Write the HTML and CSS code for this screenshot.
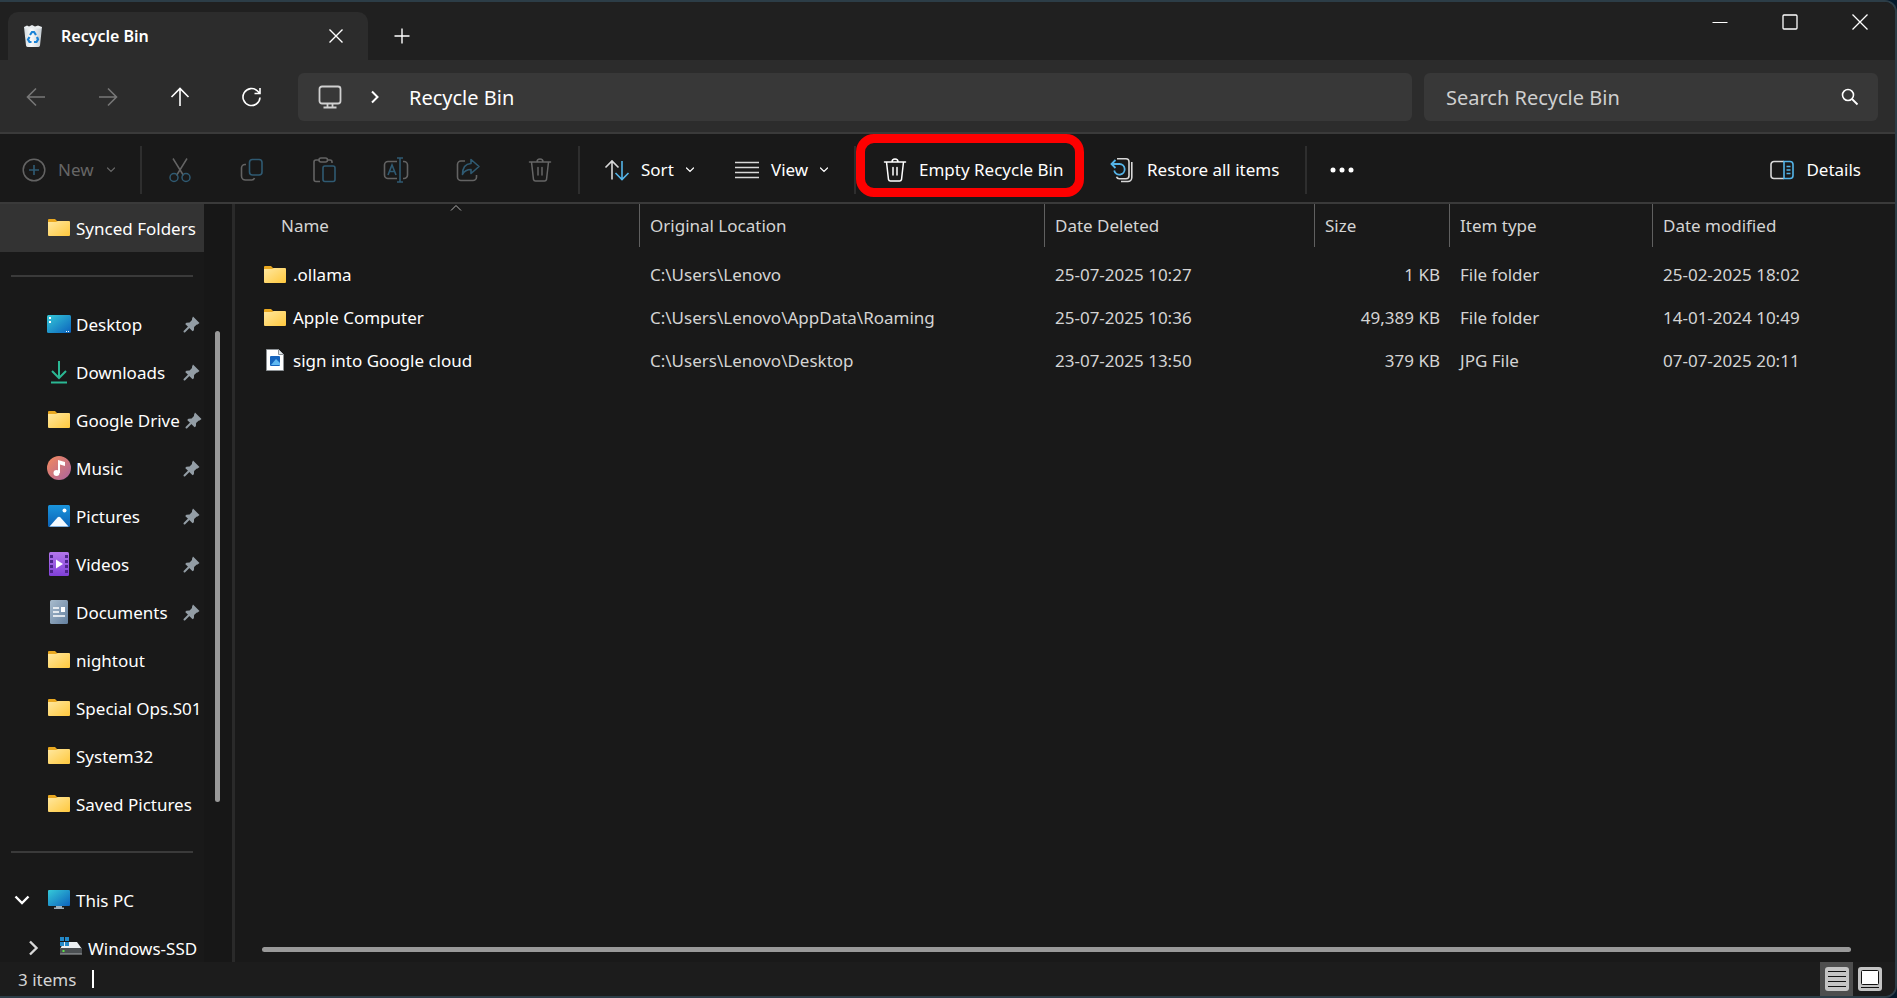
FILE: index.html
```
<!DOCTYPE html>
<html lang="en">
<head>
    <meta charset="UTF-8">
    <meta name="viewport" content="width=device-width, initial-scale=1.0">
    <title>Recycle Bin</title>
    <link rel="stylesheet" href="styles.css">
</head>
<body>
    <!-- Shared icons -->
    <svg class="defs" width="0" height="0" aria-hidden="true">
        <defs>
            <linearGradient id="g-folder" x1="0" y1="0" x2="1" y2="1"><stop offset="0" stop-color="#ffe8a0"/><stop offset="1" stop-color="#ffc83d"/></linearGradient>
            <linearGradient id="g-desktop" x1="0" y1="0" x2="1" y2="1"><stop offset="0" stop-color="#35c9d8"/><stop offset="1" stop-color="#0c62bd"/></linearGradient>
            <linearGradient id="g-music" x1="0" y1="0" x2="1" y2="1"><stop offset="0" stop-color="#f58b5c"/><stop offset="1" stop-color="#a8629f"/></linearGradient>
            <linearGradient id="g-pictures" x1="0" y1="0" x2="0" y2="1"><stop offset="0" stop-color="#1a95dd"/><stop offset="1" stop-color="#0c62b5"/></linearGradient>
            <linearGradient id="g-videos" x1="0" y1="0" x2="0" y2="1"><stop offset="0" stop-color="#b476ec"/><stop offset="1" stop-color="#8040d8"/></linearGradient>
            <linearGradient id="g-documents" x1="0" y1="0" x2="1" y2="1"><stop offset="0" stop-color="#a9bccd"/><stop offset="1" stop-color="#64809f"/></linearGradient>
            <linearGradient id="g-bin" x1="0" y1="0" x2="1" y2="0"><stop offset="0" stop-color="#d3dade"/><stop offset="0.4" stop-color="#f8fafb"/><stop offset="1" stop-color="#c4ccd2"/></linearGradient>
        </defs>
        <symbol id="folder" viewBox="0 0 24 24">
            <path d="M1 4a1 1 0 0 1 1-1h6l2 2h12v4H1z" fill="#e9a820"/>
            <path d="M1 6h8l2-1h11a1 1 0 0 1 1 1v13a1 1 0 0 1-1 1H2a1 1 0 0 1-1-1z" fill="url(#g-folder)"/>
        </symbol>
        <symbol id="pin" viewBox="0 0 18 18">
            <path d="M10 1.500 16.500 8l-2 1.600-1 .1-2.400 2.400-.2 3.100-1.300 1.100L2.200 9l1.200-1.300 3.200-.2L9 5.100l.1-1.700z" fill="#939da5"/>
            <path d="M6 12 1.500 16.500" stroke="#939da5" stroke-width="2" stroke-linecap="round"/>
        </symbol>
        <symbol id="chevron" viewBox="0 0 10 10">
            <path d="M1.500 3 5 6.500 8.500 3" fill="none" stroke="currentColor" stroke-width="1.200" stroke-linecap="round"/>
        </symbol>
        <symbol id="trash" viewBox="0 0 26 26">
            <path d="M2.500 5h21M10 5a3 3 0 0 1 6 0M4.500 5l2 17.500a2 2 0 0 0 2 1.500h9a2 2 0 0 0 2-1.500L21.500 5M11 10.500v7.500M15 10.500v7.500" fill="none" stroke="currentColor" stroke-width="1.500" stroke-linecap="round"/>
        </symbol>
    </svg>

    <div class="window">
        <header class="title-bar">
            <div class="tab">
                <svg width="22" height="24" viewBox="0 0 22 24">
                    <path d="M2 3h18l-2 18.500a2 2 0 0 1-2 1.500H6a2 2 0 0 1-2-1.500z" fill="url(#g-bin)"/>
                    <path d="M2 3l3-1.500 2 1L10 1l3 1.500 3-1 4 1.500-1 1.500H3z" fill="#e9edf0"/>
                    <path d="M8 11l2-3h2l2 3M15 13l1 2.500-1.500 2.500H12M9.500 18H7.500L6 15.500 7.500 13" fill="none" stroke="#1b83d6" stroke-width="2.200"/>
                </svg>
                <span class="tab-title">Recycle Bin</span>
                <button class="tab-close" aria-label="Close tab">
                    <svg width="16" height="16" viewBox="0 0 16 16"><path d="M1.500 1.500l13 13M14.500 1.500l-13 13" stroke="#fff" stroke-width="1.400"/></svg>
                </button>
            </div>
            <button class="new-tab" aria-label="New tab">
                <svg width="16" height="16" viewBox="0 0 16 16"><path d="M8 0.500v15M0.500 8h15" stroke="#fff" stroke-width="1.400"/></svg>
            </button>
            <div class="window-controls">
                <button aria-label="Minimize"><svg width="16" height="16" viewBox="0 0 16 16"><path d="M0.500 8.500h15" stroke="#fff"/></svg></button>
                <button aria-label="Maximize"><svg width="16" height="16" viewBox="0 0 16 16"><rect x="1" y="1" width="14" height="14" rx="1" fill="none" stroke="#fff" stroke-width="1.300"/></svg></button>
                <button aria-label="Close"><svg width="16" height="16" viewBox="0 0 16 16"><path d="M0.500 0.500l15 15M15.500 0.500l-15 15" stroke="#fff" stroke-width="1.300"/></svg></button>
            </div>
        </header>

        <nav class="nav-bar">
            <div class="nav-buttons">
                <button class="dim" aria-label="Back"><svg width="20" height="20" viewBox="0 0 20 20"><path d="M19 10H1.500M10 1.500 1.500 10l8.500 8.500"/></svg></button>
                <button class="dim" aria-label="Forward"><svg width="20" height="20" viewBox="0 0 20 20"><path d="M1 10h17.500M10 1.500l8.500 8.500-8.500 8.500"/></svg></button>
                <button aria-label="Up"><svg width="20" height="20" viewBox="0 0 20 20"><path d="M10 19V1.500M1.500 10 10 1.500l8.500 8.500"/></svg></button>
                <button aria-label="Refresh"><svg width="20" height="20" viewBox="0 0 20 20"><path d="M18 10.500A8.500 8.500 0 1 1 15.500 4L18 6.500M18 1v5.500h-5.500"/></svg></button>
            </div>
            <div class="address">
                <svg width="24" height="24" viewBox="0 0 24 24"><rect x="1.500" y="1.500" width="21" height="17" rx="2.500" fill="none" stroke="#d0d0d0" stroke-width="1.800"/><path d="M9.500 19v3.500M14.500 19v3.500M5.500 22.500h13" stroke="#d0d0d0" stroke-width="1.800"/></svg>
                <svg class="crumb-arrow" width="10" height="14" viewBox="0 0 10 14"><path d="M2 1.500 7.500 7 2 12.500" fill="none" stroke="#fff" stroke-width="2"/></svg>
                <a href="#">Recycle Bin</a>
            </div>
            <form class="search">
                <input type="text" placeholder="Search Recycle Bin" aria-label="Search Recycle Bin">
                <button type="button" aria-label="Search"><svg width="18" height="18" viewBox="0 0 18 18"><circle cx="7" cy="7" r="5.500" fill="none" stroke="#fff" stroke-width="1.600"/><path d="M11 11l5.500 5.500" stroke="#fff" stroke-width="1.800"/></svg></button>
            </form>
        </nav>

        <div class="toolbar">
            <button class="tool new" disabled>
                <svg width="24" height="24" viewBox="0 0 24 24"><circle cx="12" cy="12" r="10.800" fill="none" stroke="#636363" stroke-width="1.500"/><path d="M12 7v10M7 12h10" stroke="#2f5a72" stroke-width="1.700"/></svg>
                <span>New</span>
                <svg width="10" height="10"><use href="#chevron"/></svg>
            </button>
            <span class="divider"></span>
            <button class="tool icon-only" aria-label="Cut" disabled>
                <svg width="26" height="26" viewBox="0 0 26 26" fill="none" stroke-width="1.500"><path d="M6 1.500l10.500 17M20 1.500l-10.500 17" stroke="#636363"/><circle cx="7" cy="20.500" r="4" stroke="#2f5a72"/><circle cx="19" cy="20.500" r="4" stroke="#2f5a72"/></svg>
            </button>
            <button class="tool icon-only" aria-label="Copy" disabled>
                <svg width="26" height="26" viewBox="0 0 26 26" fill="none" stroke-width="1.600"><path d="M7 7.500H6A3.500 3.500 0 0 0 2.500 11V19A4 4 0 0 0 6.500 23h6a3 3 0 0 0 3-2" stroke="#636363"/><rect x="10.500" y="2.500" width="12.500" height="15.500" rx="3" stroke="#2f5a72"/></svg>
            </button>
            <button class="tool icon-only" aria-label="Paste" disabled>
                <svg width="26" height="26" viewBox="0 0 26 26" fill="none" stroke-width="1.600"><path d="M8 3H5a2 2 0 0 0-2 2v17.500a2 2 0 0 0 2 2h4M16 3h3a2 2 0 0 1 2 2v1" stroke="#636363"/><rect x="8" y="1" width="8.500" height="4" rx="2" stroke="#636363"/><rect x="12" y="9" width="12" height="15.500" rx="2" stroke="#2f5a72"/></svg>
            </button>
            <button class="tool icon-only" aria-label="Rename" disabled>
                <svg width="26" height="26" viewBox="0 0 26 26" fill="none" stroke-width="1.600"><path d="M14 4.500H5A3.500 3.500 0 0 0 1.500 8v10A3.500 3.500 0 0 0 5 21.500h9M20 4.500h1a3.500 3.500 0 0 1 3.500 3.500v10a3.500 3.500 0 0 1-3.500 3.500h-1" stroke="#636363"/><path d="M5 18 9 8l4 10M6.500 14.500h5M17 1v24M14 1h6M14 25h6" stroke="#2f5a72"/></svg>
            </button>
            <button class="tool icon-only" aria-label="Share" disabled>
                <svg width="26" height="26" viewBox="0 0 26 26" fill="none" stroke-width="1.600" stroke-linejoin="round"><path d="M10 4H6a3.500 3.500 0 0 0-3.500 3.500V20A3.500 3.500 0 0 0 6 23.500h12A3.500 3.500 0 0 0 21.500 20v-2" stroke="#636363"/><path d="M16 2.500 24 9.500l-8 7V12.500c-4.500 0-7 2-8.500 5C7.500 11 10.500 6.800 16 6.500z" stroke="#2f5a72"/></svg>
            </button>
            <button class="tool icon-only" aria-label="Delete" disabled>
                <svg width="26" height="26"><use href="#trash"/></svg>
            </button>
            <span class="divider"></span>
            <button class="tool sort">
                <svg width="26" height="26" viewBox="0 0 26 26" fill="none" stroke-width="1.600"><path d="M8 22.500V4M1.500 10.500 8 4l6.500 6.500" stroke="#d8d8d8"/><path d="M18 4v18.500M11.500 16l6.500 6.500 6.500-6.500" stroke="#54b4e8"/></svg>
                <span>Sort</span>
                <svg width="10" height="10"><use href="#chevron"/></svg>
            </button>
            <button class="tool view">
                <svg width="26" height="26" viewBox="0 0 26 26"><path d="M1 5.500h24M1 10.500h24M1 15.500h24M1 20.500h24" stroke="#d8d8d8" stroke-width="1.300"/></svg>
                <span>View</span>
                <svg width="10" height="10"><use href="#chevron"/></svg>
            </button>
            <span class="divider"></span>
            <button class="tool empty-bin">
                <svg width="26" height="26"><use href="#trash"/></svg>
                <span>Empty Recycle Bin</span>
            </button>
            <button class="tool restore">
                <svg width="26" height="26" viewBox="0 0 26 26" fill="none" stroke-width="1.600"><path d="M7 1.800h9a3 3 0 0 1 3 3v14a3 3 0 0 1-3 3H9.500a3 3 0 0 1-3-2M21.800 5v15.500a4 4 0 0 1-4 4H11" stroke="#d8d8d8"/><path d="M2 7h7.500a5.300 5.300 0 1 1-5.300 6.500M5.500 3 1.500 7l4 4" stroke="#54b4e8" stroke-width="1.800"/></svg>
                <span>Restore all items</span>
            </button>
            <span class="divider"></span>
            <button class="tool icon-only more" aria-label="See more">
                <svg width="24" height="6" viewBox="0 0 24 6" fill="#fff"><circle cx="3" cy="3" r="2.500"/><circle cx="12" cy="3" r="2.500"/><circle cx="21" cy="3" r="2.500"/></svg>
            </button>
            <button class="tool details">
                <svg width="26" height="26" viewBox="0 0 26 26" fill="none" stroke-width="1.600"><path d="M15 4.500H5a3 3 0 0 0-3 3v11a3 3 0 0 0 3 3h10" stroke="#d8d8d8"/><path d="M15 4.500h6a3 3 0 0 1 3 3v11a3 3 0 0 1-3 3h-6zM17.500 9.500h4M17.500 13h4M17.500 16.500h4" stroke="#54b4e8"/></svg>
                <span>Details</span>
            </button>
        </div>

        <div class="content">
            <aside class="sidebar">
                <div class="tree">
                    <a class="item selected" href="#"><svg width="24" height="24"><use href="#folder"/></svg><span>Synced Folders</span></a>
                    <hr>
                    <a class="item" href="#">
                        <svg width="24" height="24" viewBox="0 0 24 24"><rect y="3" width="24" height="18" rx="1.500" fill="url(#g-desktop)"/><path d="M2 5h2v2H2zM2 9h2v2H2zM19 19h1v1h-1zM21 19h1v1h-1z" fill="#fff"/></svg>
                        <span>Desktop</span><svg class="pin" width="18" height="18"><use href="#pin"/></svg>
                    </a>
                    <a class="item" href="#">
                        <svg width="24" height="24" viewBox="0 0 24 24" fill="none" stroke="#2bb894" stroke-width="2"><path d="M12 1v17M5 11l7 7 7-7M4 22.500h16"/></svg>
                        <span>Downloads</span><svg class="pin" width="18" height="18"><use href="#pin"/></svg>
                    </a>
                    <a class="item" href="#"><svg width="24" height="24"><use href="#folder"/></svg><span>Google Drive</span><svg class="pin" width="18" height="18"><use href="#pin"/></svg></a>
                    <a class="item" href="#">
                        <svg width="24" height="24" viewBox="0 0 24 24"><circle cx="12" cy="12" r="12" fill="url(#g-music)"/><circle cx="9.500" cy="17" r="3" fill="#fff"/><path d="M11 17V4l7 2v4l-5-1.500V17z" fill="#fff"/></svg>
                        <span>Music</span><svg class="pin" width="18" height="18"><use href="#pin"/></svg>
                    </a>
                    <a class="item" href="#">
                        <svg width="24" height="24" viewBox="0 0 24 24"><rect x="1" y="1" width="22" height="22" rx="1.500" fill="url(#g-pictures)"/><path d="M2.500 22.500 10.500 13.500q1.500-1.500 3 0l8 9z" fill="#f4faff"/><circle cx="17.500" cy="6.500" r="2" fill="#fff"/></svg>
                        <span>Pictures</span><svg class="pin" width="18" height="18"><use href="#pin"/></svg>
                    </a>
                    <a class="item" href="#">
                        <svg width="24" height="24" viewBox="0 0 24 24"><rect x="2" width="20" height="24" rx="1.500" fill="url(#g-videos)"/><path d="M3 3h3v3H3zM3 8h3v3H3zM3 13h3v3H3zM3 18h3v3H3zM18 3h3v3h-3zM18 8h3v3h-3zM18 13h3v3h-3zM18 18h3v3h-3z" fill="#4d238c"/><path d="M9 7.500v9l7-4.500z" fill="#fff"/></svg>
                        <span>Videos</span><svg class="pin" width="18" height="18"><use href="#pin"/></svg>
                    </a>
                    <a class="item" href="#">
                        <svg width="24" height="24" viewBox="0 0 24 24"><rect x="3" width="18" height="24" rx="1.500" fill="url(#g-documents)"/><path d="M6 8h6M6 12h6M6 16h12" stroke="#fff" stroke-width="1.500"/><rect x="14" y="7" width="4" height="5" fill="#fff"/></svg>
                        <span>Documents</span><svg class="pin" width="18" height="18"><use href="#pin"/></svg>
                    </a>
                    <a class="item" href="#"><svg width="24" height="24"><use href="#folder"/></svg><span>nightout</span></a>
                    <a class="item" href="#"><svg width="24" height="24"><use href="#folder"/></svg><span>Special Ops.S01</span></a>
                    <a class="item" href="#"><svg width="24" height="24"><use href="#folder"/></svg><span>System32</span></a>
                    <a class="item" href="#"><svg width="24" height="24"><use href="#folder"/></svg><span>Saved Pictures</span></a>
                    <hr>
                    <a class="item expandable" href="#">
                        <svg class="arrow" width="16" height="16" viewBox="0 0 16 16"><path d="M1.500 4.500l6.500 6.500 6.500-6.500" fill="none" stroke="#fff" stroke-width="2.400"/></svg>
                        <svg width="24" height="24" viewBox="0 0 24 24"><rect x="1" y="2" width="22" height="16" rx="1" fill="url(#g-desktop)"/><path d="M9 18h6v1.500h2V21H7v-1.500h2z" fill="#9fb0bb"/></svg>
                        <span>This PC</span>
                    </a>
                    <a class="item expandable child" href="#">
                        <svg class="arrow" width="16" height="16" viewBox="0 0 16 16"><path d="M5 1.500l6.500 6.500-6.500 6.500" fill="none" stroke="#d8d8d8" stroke-width="2.400"/></svg>
                        <svg width="24" height="24" viewBox="0 0 24 24"><path d="M5 6h13l5 7H1z" fill="#eceff1"/><rect x="1" y="12" width="22" height="6" rx="1" fill="#4b4f52"/><path d="M1 18h22" stroke="#a7abad"/><path d="M3.500 15h2" stroke="#5fe04a" stroke-width="2"/><path d="M1 1h4v4H1zM6 1h4v4H6zM1 6h4v4H1zM6 6h4v4H6z" fill="#2389c9"/></svg>
                        <span>Windows-SSD</span>
                    </a>
                </div>
                <div class="scroll-track"><div class="thumb"></div></div>
            </aside>

            <main class="files">
                <table>
                    <colgroup>
                        <col class="col-name"><col class="col-location"><col class="col-deleted"><col class="col-size"><col class="col-type"><col>
                    </colgroup>
                    <thead>
                        <tr>
                            <th><div class="sorted">Name<svg class="caret" width="12" height="8" viewBox="0 0 12 8"><path d="M1 6.500 6 1.500l5 5" fill="none" stroke="#b0b0b0"/></svg></div></th>
                            <th>Original Location</th>
                            <th>Date Deleted</th>
                            <th>Size</th>
                            <th>Item type</th>
                            <th>Date modified</th>
                        </tr>
                    </thead>
                    <tbody>
                        <tr>
                            <td><div class="file"><svg width="24" height="24"><use href="#folder"/></svg>.ollama</div></td>
                            <td>C:\Users\Lenovo</td>
                            <td>25-07-2025 10:27</td>
                            <td class="size">1 KB</td>
                            <td>File folder</td>
                            <td>25-02-2025 18:02</td>
                        </tr>
                        <tr>
                            <td><div class="file"><svg width="24" height="24"><use href="#folder"/></svg>Apple Computer</div></td>
                            <td>C:\Users\Lenovo\AppData\Roaming</td>
                            <td>25-07-2025 10:36</td>
                            <td class="size">49,389 KB</td>
                            <td>File folder</td>
                            <td>14-01-2024 10:49</td>
                        </tr>
                        <tr>
                            <td><div class="file"><svg width="24" height="24" viewBox="0 0 24 24"><path d="M3.500 .5h12l5 5v16h-17z" fill="#fff" stroke="#8d9296"/><path d="M15.500 .5v5h5" fill="#dfe4e8" stroke="#8d9296"/><rect x="7" y="7" width="10" height="10" rx="1" fill="#1463bd"/><path d="M8 16l5-6 4 4v2z" fill="#5fb8f2"/></svg>sign into Google cloud</div></td>
                            <td>C:\Users\Lenovo\Desktop</td>
                            <td>23-07-2025 13:50</td>
                            <td class="size">379 KB</td>
                            <td>JPG File</td>
                            <td>07-07-2025 20:11</td>
                        </tr>
                    </tbody>
                </table>
                <div class="h-scroll"><div class="thumb"></div></div>
            </main>
        </div>

        <footer class="status-bar">
            <span>3 items</span>
            <span class="mark"></span>
            <div class="view-buttons">
                <button class="active" aria-label="Details view"><svg width="24" height="24" viewBox="0 0 24 24"><rect width="24" height="24" rx="3" fill="#c4c4c4"/><path d="M3 4.500h18M3 9.500h18M3 14.500h18M3 19.500h18" stroke="#111"/></svg></button>
                <button aria-label="Large icons view"><svg width="24" height="24" viewBox="0 0 24 24"><rect width="24" height="24" rx="3" fill="#c4c4c4"/><rect x="3.500" y="3.500" width="17" height="14" rx="1" fill="#fff" stroke="#111"/><path d="M3 20.500h18" stroke="#111"/></svg></button>
            </div>
        </footer>
    </div>
</body>
</html>
```
FILE: styles.css
```
* {
    box-sizing: border-box;
}

body {
    margin: 0;
    background-color: #04192b;
    color: #fff;
    font-family: "Noto Sans", "Open Sans", sans-serif;
    font-size: 17px;
}

button {
    background: none;
    border: none;
    padding: 0;
    color: inherit;
    font: inherit;
    display: flex;
    align-items: center;
    justify-content: center;
}

a {
    color: inherit;
    text-decoration: none;
}

svg {
    flex: none;
}

.defs {
    position: absolute;
}

/* Window frame */
.window {
    height: 100vh;
    display: flex;
    flex-direction: column;
    border: 2px solid #2c3d47;
    border-left: none;
    border-radius: 0 12px 12px 0;
    background-color: #191919;
    overflow: hidden;
}

/* Title bar */
.title-bar {
    display: flex;
    height: 58px;
    flex: none;
    padding-left: 8px;
    background-color: #202020;
}

.tab {
    display: flex;
    align-items: center;
    width: 360px;
    margin-top: 10px;
    padding: 0 24px 0 14px;
    border-radius: 10px 10px 0 0;
    background-color: #2c2c2c;
}

.tab-title {
    margin-left: 17px;
    font-size: 16px;
    font-weight: 600;
}

.tab-close {
    margin-left: auto;
}

.new-tab {
    width: 68px;
    margin-top: 10px;
}

.window-controls {
    display: flex;
    height: 40px;
    margin-left: auto;
}

.window-controls button {
    width: 70px;
}

/* Navigation */
.nav-bar {
    display: flex;
    align-items: center;
    gap: 12px;
    height: 74px;
    flex: none;
    padding: 2px 17px 0 0;
    background-color: #2c2c2c;
    border-bottom: 2px solid #3a3a3a;
}

.nav-buttons {
    display: flex;
    width: 286px;
}

.nav-buttons button {
    width: 72px;
    height: 48px;
    flex: none;
}

.nav-buttons path {
    fill: none;
    stroke: #fff;
    stroke-width: 1.6px;
}

.nav-buttons .dim path {
    stroke: #777;
}

.address,
.search {
    display: flex;
    align-items: center;
    height: 48px;
    border-radius: 6px;
    background-color: #383838;
    font-size: 20px;
}

.address {
    flex: 1;
    padding-left: 20px;
}

.crumb-arrow {
    margin: 0 29px 0 28px;
}

.search {
    width: 454px;
    padding: 0 19px 0 22px;
}

.search input {
    flex: 1;
    min-width: 0;
    padding: 0;
    border: none;
    outline: none;
    background: none;
    color: #fff;
    font: inherit;
}

.search input::placeholder {
    color: #cfcfcf;
    opacity: 1;
}

/* Toolbar */
.toolbar {
    display: flex;
    align-items: center;
    height: 70px;
    flex: none;
    padding-top: 3px;
    border-bottom: 2px solid #3a3a3a;
}

.tool {
    justify-content: flex-start;
    gap: 11px;
    height: 52px;
    padding: 0 20px;
    white-space: nowrap;
}

.tool:disabled {
    color: #666;
}

.tool.new {
    width: 138px;
    gap: 12px;
    padding: 0 0 0 22px;
}

.tool.icon-only {
    justify-content: center;
    width: 72px;
    padding: 0;
}

.tool.sort {
    width: 132px;
    padding: 0 0 0 22px;
}

.tool.view {
    width: 138px;
    padding: 0 0 0 20px;
}

.tool.more {
    width: 66px;
}

.divider {
    width: 2px;
    height: 48px;
    margin: 0 2px;
    background-color: #2e2e2e;
}

.tool.empty-bin {
    position: relative;
    width: 226px;
    padding: 0 0 0 24px;
}

/* Highlight ring over the button */
.empty-bin::after {
    content: "";
    position: absolute;
    inset: -10px 0 -1px -2px;
    border: 9px solid #fe0000;
    border-radius: 18px;
}

.tool.restore {
    padding: 0 24px 0 26px;
}

.tool.details {
    margin-left: auto;
    padding-right: 34px;
}

/* Sidebar */
.content {
    display: flex;
    flex: 1;
    min-height: 0;
}

.sidebar {
    display: flex;
    width: 235px;
    border-right: 3px solid #2a2a2a;
}

.tree {
    width: 204px;
    overflow: hidden;
}

.tree hr {
    height: 2px;
    margin: 23px 11px 23px 11px;
    border: none;
    background-color: #3a3a3a;
}

.item {
    display: flex;
    align-items: center;
    gap: 5px;
    height: 48px;
    padding-left: 47px;
    white-space: nowrap;
}

.item.selected {
    background-color: #333;
}

.pin {
    margin: 0 3px 0 auto;
}

.item.expandable {
    padding-left: 14px;
}

.item.child {
    padding-left: 25px;
}

.item .arrow {
    margin-right: 12px;
}

.item.child .arrow {
    margin-right: 13px;
}

.scroll-track {
    display: flex;
    flex: 1;
    padding: 127px 12px 160px 11px;
    background-color: #171717;
}

.thumb {
    flex: 1;
    border-radius: 3px;
    background-color: #999;
}

/* File list */
.files {
    display: flex;
    flex: 1;
    flex-direction: column;
    min-width: 0;
}

table {
    width: 100%;
    border-collapse: separate;
    border-spacing: 0;
    table-layout: fixed;
}

.col-name,
.col-location {
    width: 405px;
}

.col-deleted {
    width: 270px;
}

.col-size {
    width: 135px;
}

.col-type {
    width: 203px;
}

th,
td {
    height: 43px;
    padding: 0 10px;
    color: #d4d4d4;
    font-weight: 400;
    text-align: left;
    white-space: nowrap;
}

th {
    border-right: 1px solid #606060;
}

th:first-child,
td:first-child {
    padding: 0;
}

th:last-child {
    border-right: none;
}

/* Space between the header and the first row */
tbody::before {
    content: "";
    display: block;
    height: 6px;
}

.sorted {
    position: relative;
    margin-left: 37px;
    padding: 10px 9px;
    line-height: 23px;
}

.caret {
    position: absolute;
    top: 0;
    left: calc(50% - 6px);
}

.file {
    display: flex;
    align-items: center;
    gap: 6px;
    padding-left: 28px;
    color: #fff;
}

td.size {
    text-align: right;
}

.h-scroll {
    display: flex;
    height: 20px;
    margin-top: auto;
    padding: 5px 44px 10px 27px;
}

/* Status bar */
.status-bar {
    display: flex;
    align-items: center;
    height: 34px;
    flex: none;
    padding: 0 13px 0 18px;
    background-color: #1c1c1c;
    color: #d4d4d4;
}

.mark {
    width: 2px;
    height: 18px;
    margin-left: 16px;
    background-color: #fff;
}

.view-buttons {
    display: flex;
    gap: 5px;
    height: 100%;
    margin-left: auto;
}

.view-buttons .active {
    width: 33px;
    background-color: #4e4e4e;
}
```
